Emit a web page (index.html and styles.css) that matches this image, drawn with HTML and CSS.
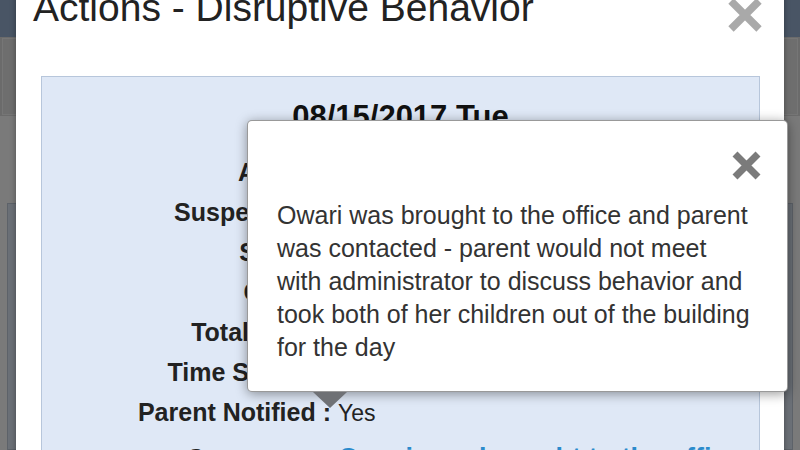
FILE: index.html
```html
<!DOCTYPE html>
<html lang="en">
<head>
<meta charset="utf-8">
<title>Actions - Disruptive Behavior</title>
<link rel="stylesheet" href="styles.css">
</head>
<body>
<div class="backdrop">
  <div class="topbar"></div>
  <div class="toolbar"><div class="toolbar-inner"></div></div>
  <div class="main"><div class="card"></div></div>
</div>

<div class="modal">
  <div class="modal-header">
    <h4 class="modal-title">Actions - Disruptive Behavior</h4>
    <button class="close close-modal" aria-label="Close">
      <svg viewBox="0 0 36 36" width="36" height="36"><path d="M4 4 L32 32 M32 4 L4 32" /></svg>
    </button>
  </div>
  <div class="modal-body">
    <div class="record">
      <h3 class="record-date">08/15/2017 Tue</h3>
      <div class="fields">
        <div class="label">Action :</div><div class="value">Suspension</div>
        <div class="label">Suspension :</div><div class="value">Out of School</div>
        <div class="label">Status :</div><div class="value">Served</div>
        <div class="label">Credit :</div><div class="value">1</div>
        <div class="label">Total Days :</div><div class="value">1</div>
        <div class="label">Time Served :</div><div class="value">1</div>
        <div class="label">Parent Notified :</div><div class="value">Yes</div>
        <div class="label comments">Comments :</div><div class="value link comments">Owari was brought to the office and parent was contacted</div>
      </div>
    </div>
  </div>
</div>

<div class="popover">
  <div class="popover-head">
    <button class="close close-pop" aria-label="Close">
      <svg viewBox="0 0 31 31" width="31" height="31"><path d="M4 4 L27 27 M27 4 L4 27" /></svg>
    </button>
  </div>
  <p class="popover-text">Owari was brought to the office and parent was contacted - parent would not meet with administrator to discuss behavior and took both of her children out of the building for the day</p>
</div>
</body>
</html>
```

FILE: styles.css
```css
* { box-sizing: border-box; }

html, body {
  margin: 0;
  padding: 0;
  width: 800px;
  height: 450px;
  overflow: hidden;
}

body {
  background: #7a7a7a;
  font-family: "Liberation Sans", Arial, sans-serif;
  color: #222;
  position: relative;
}

/* dimmed page behind the modal */
.backdrop {
  display: flex;
  flex-direction: column;
  height: 450px;
}
.topbar {
  height: 37px;
  background: #495565;
}
.toolbar {
  height: 79px;
  background: #6b6b6b;
  padding: 1px 2px;
}
.toolbar-inner {
  height: 100%;
  border: 1px solid #767676;
  background: #6e6e6e;
}
.main {
  flex: 1;
  padding: 87px 7px 0 7px;
}
.card {
  height: 100%;
  background: #6b7077;
  border: 1px solid #5d6269;
}

/* modal */
.modal {
  position: absolute;
  left: 16px;
  right: 16px;
  top: -14px;
  background: #fff;
  box-shadow: 0 0 6px rgba(0, 0, 0, 0.35);
}
.modal-header {
  display: flex;
  justify-content: space-between;
  align-items: flex-start;
  padding-left: 17px;
  height: 47px;
}
.modal-title {
  margin: 0;
  font-size: 39px;
  line-height: 43px;
  font-weight: normal;
  color: #222;
}
.close {
  border: 0;
  background: none;
  padding: 0;
  display: block;
}
.close svg { display: block; }
.close path {
  fill: none;
  stroke-width: 7.5;
}
.close-modal {
  margin-top: 11px;
  margin-right: 21px;
}
.close-modal path { stroke: #a9a9a9; }

.modal-body {
  padding: 43px 24px 0 25px;
}
.record {
  background: #dfe8f6;
  border: 1px solid #b7c6db;
  padding: 21px 0 20px;
}
.record-date {
  margin: 0 0 17px;
  text-align: center;
  font-size: 31px;
  line-height: 37px;
  font-weight: bold;
  color: #111;
}
.fields {
  display: grid;
  grid-template-columns: 289px 1fr;
  grid-auto-rows: 40px;
  column-gap: 7px;
  align-items: baseline;
  line-height: 40px;
}
.label {
  text-align: right;
  font-weight: bold;
  font-size: 25px;
  color: #222;
  white-space: nowrap;
}
.value {
  font-size: 23px;
  color: #222;
  white-space: nowrap;
  overflow: hidden;
}
.value.link {
  color: #2b8bcc;
  font-weight: bold;
  font-size: 27px;
}
.comments {
  margin-top: 6px;
}

/* popover */
.popover {
  position: absolute;
  left: 247px;
  top: 120px;
  width: 541px;
  background: #fff;
  border: 1px solid rgba(0, 0, 0, 0.4);
  border-radius: 5px;
  box-shadow: 0 2px 12px rgba(0, 0, 0, 0.4);
  padding: 29px 25px 27px 29px;
}
.popover::after {
  content: "";
  position: absolute;
  left: 65px;
  bottom: -17px;
  border-top: 16px solid #6f7175;
  border-left: 17px solid transparent;
  border-right: 17px solid transparent;
}
.popover-head {
  display: flex;
  justify-content: flex-end;
}
.close-pop path { stroke: #7b7b7b; stroke-width: 7; }
.popover-text {
  margin: 18px 8px 0 0;
  font-size: 25px;
  line-height: 33px;
  color: #333;
}
```
